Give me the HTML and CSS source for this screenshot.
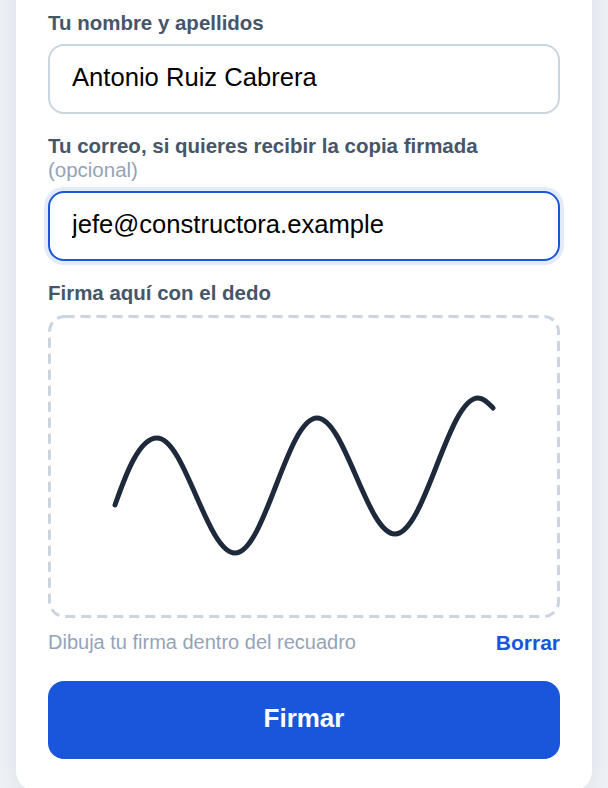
FILE: index.html

```html
<!DOCTYPE html>
<html lang="es">
<head>
    <meta charset="UTF-8">
    <meta name="viewport" content="width=device-width, initial-scale=1.0">
    <title>Firmar</title>
    <link rel="stylesheet" href="styles.css">
</head>
<body>
    <form class="card">
        <label class="field-label" for="nombre">Tu nombre y apellidos</label>
        <input class="field-input" id="nombre" type="text" value="Antonio Ruiz Cabrera">

        <label class="field-label field-label-gap" for="correo">Tu correo, si quieres recibir la copia firmada <span class="optional">(opcional)</span></label>
        <input class="field-input field-input-focus" id="correo" type="email" value="jefe@constructora.example">

        <div class="field-label field-label-sign">Firma aquí con el dedo</div>
        <div class="sign-box">
            <svg class="sign-canvas" viewBox="48 315 512 303">
                <rect class="sign-frame" x="49.5" y="316.5" width="509" height="300" rx="15"/>
                <path class="sign-stroke" d="M115 505 C124 480 138 438 157 438 C185 438 207 553 235 553 C265 553 287 418 317 418 C345 418 367 534 395 534 C425 534 448 398 478 398 C484 398 488 403 493 408"/>
            </svg>
        </div>
        <div class="sign-footer">
            <span class="hint">Dibuja tu firma dentro del recuadro</span>
            <button class="clear-btn" type="button">Borrar</button>
        </div>

        <button class="submit-btn" type="button">Firmar</button>
    </form>
</body>
</html>
```

FILE: styles.css

```css
* { box-sizing: border-box; }
html, body { height: 788px; overflow: hidden; }
body { margin: 0; padding: 0 16px; background: #eef2f7; font-family: "Liberation Sans", Arial, sans-serif; }
.card { background: white; height: 831px; margin-top: -40px; padding: 51px 32px 0; border-radius: 20px; box-shadow: 0 4px 24px rgba(15,23,42,0.08); }
.field-label { display: block; color: #475569; font-size: 20.48px; font-weight: bold; line-height: 23px; margin-bottom: 10px; }
.field-label-gap { margin-top: 20px; line-height: 24px; margin-bottom: 9px; }
.field-label-sign { margin-top: 20px; margin-bottom: 11px; }
.optional { display: block; color: #94a3b8; font-weight: normal; }
.field-input { display: block; width: 100%; height: 70px; padding: 0 22px 3px; border: 2px solid #cbd5e1; border-radius: 16px; background: white; color: black; font-family: inherit; font-size: 25.6px; outline: none; }
.field-input-focus { border-color: #1a56db; box-shadow: 0 0 0 4px #e3eafb; }
.sign-box { height: 303px; }
.sign-canvas { display: block; width: 100%; height: 100%; }
.sign-frame { fill: none; stroke: #cbd5e1; stroke-width: 3; stroke-dasharray: 10 6; }
.sign-stroke { fill: none; stroke: #1e293b; stroke-width: 5; stroke-linecap: round; stroke-linejoin: round; }
.sign-footer { display: flex; justify-content: space-between; align-items: center; margin-top: 11px; height: 26px; }
.hint { color: #94a3b8; font-size: 20px; }
.clear-btn { border: none; background: none; padding: 2px 0 0; color: #1a56db; font-family: inherit; font-size: 21px; font-weight: bold; cursor: pointer; }
.submit-btn { display: block; width: 100%; height: 78px; margin-top: 26px; padding: 0 0 3px; border: none; border-radius: 16px; background: #1a56db; color: white; font-family: inherit; font-size: 26px; font-weight: bold; cursor: pointer; }
```
